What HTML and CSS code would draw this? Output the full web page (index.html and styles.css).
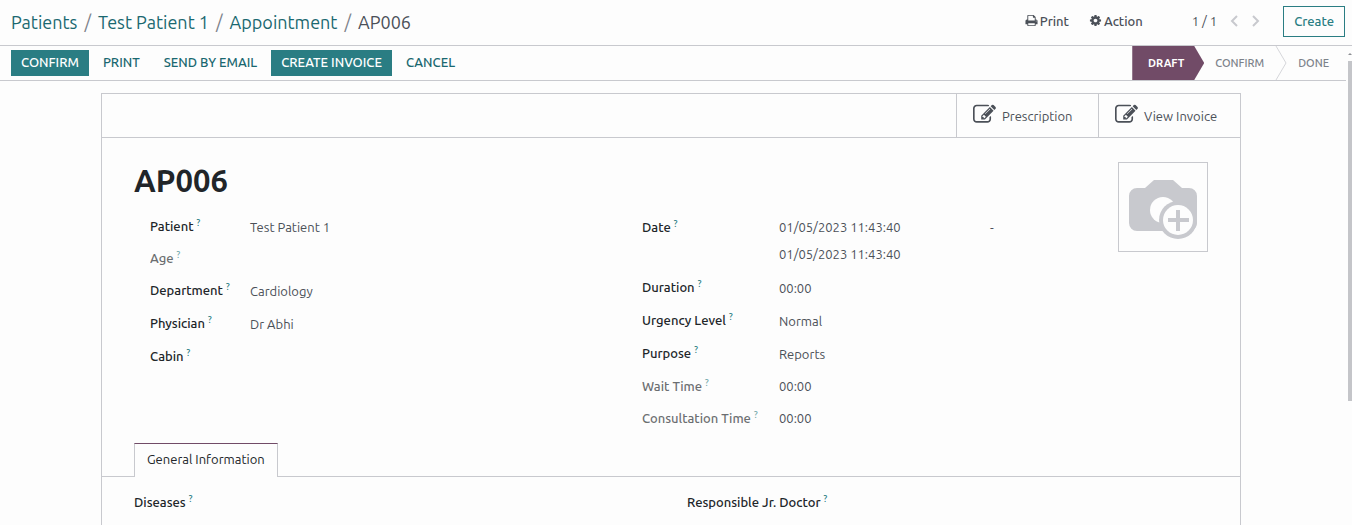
FILE: index.html
```
<!DOCTYPE html>
<html lang="en">
<head>
  <meta charset="UTF-8">
  <meta name="viewport" content="width=device-width, initial-scale=1.0">
  <title>AP006 - Appointment</title>
  <link rel="stylesheet" href="styles.css">
</head>
<body>
  <!-- Shared icons -->
  <svg class="sprite" aria-hidden="true">
    <symbol id="icon-print" viewBox="0 0 1792 1792">
      <path d="M448 1536h896v-256h-896v256zm0-640h896v-384h-160q-40 0-68-28t-28-68v-160h-640v640zm1152 64q0-26-19-45t-45-19-45 19-19 45 19 45 45 19 45-19 19-45zm128 0v416q0 13-9.500 22.500t-22.500 9.500h-224v160q0 40-28 68t-68 28h-960q-40 0-68-28t-28-68v-160h-224q-13 0-22.500-9.500t-9.500-22.500v-416q0-79 56.500-135.500t135.500-56.500h64v-544q0-40 28-68t68-28h672q40 0 88 20t76 48l152 152q28 28 48 76t20 88v256h64q79 0 135.500 56.500t56.500 135.500z"/>
    </symbol>
    <symbol id="icon-cog" viewBox="0 0 1792 1792">
      <path d="M1152 896q0-106-75-181t-181-75-181 75-75 181 75 181 181 75 181-75 75-181zm512-109v222q0 12-8 23t-20 13l-185 28q-19 54-39 91 35 50 107 138 10 12 10 25t-9 23q-27 37-99 108t-94 71q-12 0-26-9l-138-108q-44 23-91 38-16 136-29 186-7 28-36 28h-222q-14 0-24.500-8.500t-11.500-21.500l-28-184q-49-16-90-37l-141 107q-10 9-25 9-14 0-25-11-126-114-165-168-7-10-7-23 0-12 8-23 15-21 51-66.500t54-70.500q-27-50-41-99l-183-27q-13-2-21-12.500t-8-23.500v-222q0-12 8-23t19-13l186-28q14-46 39-92-40-57-107-138-10-12-10-24 0-10 9-23 26-36 98.500-107.500t94.500-71.500q13 0 26 10l138 107q44-23 91-38 16-136 29-186 7-28 36-28h222q14 0 24.500 8.500t11.500 21.500l28 184q49 16 90 37l142-107q9-9 24-9 13 0 25 10 129 119 165 170 7 8 7 22 0 12-8 23-15 21-51 66.500t-54 70.500q26 50 41 98l183 28q13 2 21 12.500t8 23.500z"/>
    </symbol>
    <symbol id="icon-edit" viewBox="0 0 1792 1792">
      <path d="M888 1184l116-116-152-152-116 116v56h96v96h56zm440-720q-16-16-33 1l-350 350q-17 17-1 33t33-1l350-350q17-17 1-33zm80 594v190q0 119-84.500 203.500t-203.500 84.500h-832q-119 0-203.500-84.500t-84.500-203.500v-832q0-119 84.500-203.500t203.500-84.500h832q63 0 117 25 15 7 18 23 3 17-9 29l-49 49q-14 14-32 8-23-6-45-6h-832q-66 0-113 47t-47 113v832q0 66 47 113t113 47h832q66 0 113-47t47-113v-126q0-13 9-22l64-64q15-15 35-7t20 29zm-96-738l288 288-672 672h-288v-288zm444 132l-92 92-288-288 92-92q28-28 68-28t68 28l152 152q28 28 28 68t-28 68z"/>
    </symbol>
  </svg>

  <header class="control-panel">
    <nav class="breadcrumb" aria-label="Breadcrumb">
      <a href="#">Patients</a>
      <span class="slash">/</span>
      <a href="#">Test Patient 1</a>
      <span class="slash">/</span>
      <a href="#">Appointment</a>
      <span class="slash">/</span>
      <span>AP006</span>
    </nav>
    <div class="actions">
      <button class="action" type="button"><svg class="icon"><use href="#icon-print"/></svg>Print</button>
      <button class="action" type="button"><svg class="icon"><use href="#icon-cog"/></svg>Action</button>
    </div>
    <div class="pager">
      <span class="count">1 / 1</span>
      <button type="button" aria-label="Previous"><svg viewBox="0 0 10 12"><path d="M8 1L3 6l5 5"/></svg></button>
      <button type="button" aria-label="Next"><svg viewBox="0 0 10 12"><path d="M2 1l5 5-5 5"/></svg></button>
    </div>
    <button class="create" type="button">Create</button>
  </header>

  <div class="content">
    <main class="form-view">
      <div class="statusbar">
        <div class="buttons">
          <button class="btn primary" type="button">CONFIRM</button>
          <button class="btn" type="button">PRINT</button>
          <button class="btn" type="button">SEND BY EMAIL</button>
          <button class="btn primary" type="button">CREATE INVOICE</button>
          <button class="btn" type="button">CANCEL</button>
        </div>
        <div class="stages">
          <button class="stage current" type="button">DRAFT</button>
          <button class="stage" type="button">CONFIRM</button>
          <svg class="chevron" viewBox="0 0 12 34"><path d="M1 0l10 17L1 34"/></svg>
          <button class="stage last" type="button">DONE</button>
        </div>
      </div>

      <div class="sheet-area">
        <div class="sheet">
          <div class="button-box">
            <button class="stat" type="button"><svg class="icon"><use href="#icon-edit"/></svg>Prescription</button>
            <button class="stat" type="button"><svg class="icon"><use href="#icon-edit"/></svg>View Invoice</button>
          </div>

          <div class="record">
            <div class="details">
              <h1>AP006</h1>
              <div class="groups">
                <dl class="group">
                  <div class="row"><dt>Patient <sup>?</sup></dt><dd>Test Patient 1</dd></div>
                  <div class="row muted"><dt>Age <sup>?</sup></dt><dd></dd></div>
                  <div class="row"><dt>Department <sup>?</sup></dt><dd>Cardiology</dd></div>
                  <div class="row"><dt>Physician <sup>?</sup></dt><dd>Dr Abhi</dd></div>
                  <div class="row"><dt>Cabin <sup>?</sup></dt><dd></dd></div>
                </dl>
                <dl class="group wide">
                  <div class="row range">
                    <dt>Date <sup>?</sup></dt>
                    <dd><span>01/05/2023 11:43:40</span><span>-</span><span>01/05/2023 11:43:40</span></dd>
                  </div>
                  <div class="row"><dt>Duration <sup>?</sup></dt><dd>00:00</dd></div>
                  <div class="row"><dt>Urgency Level <sup>?</sup></dt><dd>Normal</dd></div>
                  <div class="row"><dt>Purpose <sup>?</sup></dt><dd>Reports</dd></div>
                  <div class="row muted"><dt>Wait Time <sup>?</sup></dt><dd>00:00</dd></div>
                  <div class="row muted"><dt>Consultation Time <sup>?</sup></dt><dd>00:00</dd></div>
                </dl>
              </div>
            </div>
            <button class="avatar" type="button" aria-label="Add image">
              <svg viewBox="0 0 88 88">
                <path class="fill" d="M18 25h8l9-8h19l9 8h7a8 8 0 0 1 8 8v27a8 8 0 0 1-8 8H18a8 8 0 0 1-8-8V33a8 8 0 0 1 8-8z"/>
                <circle class="hole" cx="44" cy="47" r="13"/>
                <circle class="fill" cx="59" cy="57" r="19"/>
                <circle class="hole" cx="59" cy="57" r="15"/>
                <path class="fill" d="M57 47h4v8h9v4h-9v9h-4v-9h-8v-4h8z"/>
              </svg>
            </button>
          </div>

          <div class="tabs" role="tablist">
            <button class="tab" type="button" role="tab" aria-selected="true">General Information</button>
          </div>
          <div class="tab-page" role="tabpanel">
            <div class="heading">Diseases <sup>?</sup></div>
            <div class="heading">Responsible Jr. Doctor <sup>?</sup></div>
          </div>
        </div>
      </div>
    </main>
    <div class="scrollbar"><span class="arrow"></span><span class="thumb"></span></div>
  </div>
</body>
</html>
```
FILE: styles.css
```
* {
  box-sizing: border-box;
}
body {
  display: flex;
  flex-direction: column;
  height: 100vh;
  margin: 0;
  overflow: hidden;
  background: #fdfdfd;
  color: #4b5058;
  font: 13px/20px Ubuntu, "Noto Sans", sans-serif;
}
button {
  padding: 0;
  border: 0;
  background: none;
  color: inherit;
  font: inherit;
  white-space: nowrap;
  cursor: pointer;
}
a {
  color: #1a6870;
  text-decoration: none;
}
.sprite {
  position: absolute;
  width: 0;
  height: 0;
}
.icon {
  width: 13px;
  height: 13px;
  fill: currentColor;
}

/* Top bar */
.control-panel {
  display: flex;
  flex: none;
  align-items: center;
  height: 46px;
  padding: 0 7px 2px 11px;
  border-bottom: 1px solid #c8c9ce;
}
.breadcrumb {
  display: flex;
  flex: 1;
  gap: 7px;
  font-size: 18px;
  line-height: 24px;
  white-space: nowrap;
}
.slash {
  color: #7c828a;
}
.actions {
  display: flex;
  gap: 20px;
  padding-bottom: 2px;
  font-weight: 500;
}
.action {
  display: flex;
  align-items: center;
  gap: 2px;
}
.pager {
  display: flex;
  align-items: center;
  gap: 12px;
  margin: 0 22px 0 49px;
  padding-bottom: 2px;
}
.pager button {
  width: 10px;
  height: 12px;
}
.pager svg {
  display: block;
  fill: none;
  stroke: #c8c9ce;
  stroke-width: 2;
}
.create {
  height: 31px;
  padding: 0 10px 2px;
  border: 1px solid #2a7d83;
  color: #2a7d83;
  font-weight: 500;
}

/* Scrolling area */
.content {
  display: flex;
  flex: 1;
  min-height: 0;
}
.form-view {
  flex: 1;
  min-width: 0;
  overflow: hidden;
}
.scrollbar {
  display: flex;
  flex-direction: column;
  align-items: flex-end;
  width: 6px;
}
.arrow {
  margin-top: 7px;
  border: 2px solid transparent;
  border-top: 0;
  border-bottom-color: #8d8f94;
}
.thumb {
  width: 4px;
  height: 71%;
  margin-top: 6px;
  background: #c4c5c9;
}

/* Status bar */
.statusbar {
  display: flex;
  justify-content: space-between;
  height: 35px;
  padding-left: 11px;
  border-bottom: 1px solid #c8c9ce;
}
.buttons {
  display: flex;
  align-items: center;
  gap: 4px;
}
.btn {
  height: 26px;
  padding: 0 10px 2px;
  color: #1a6870;
  font-weight: 500;
}
.primary {
  background: #2a7d83;
  color: #fff;
}
.stages {
  display: flex;
}
.stage {
  padding: 0 11px;
  color: #7c828a;
  font-size: 11px;
  font-weight: 500;
}
.current {
  width: 72px;
  padding: 0 12px 0 8px;
  background: #714b67;
  clip-path: polygon(0 0, 62px 0, 100% 50%, 62px 100%, 0 100%);
  color: #fff;
  font-weight: 600;
}
.last {
  padding-right: 17px;
}
.chevron {
  width: 12px;
  height: 34px;
  fill: none;
  stroke: #d5d6da;
}

/* Sheet */
.sheet-area {
  padding: 12px 4px 0 0;
}
.sheet {
  max-width: 1140px;
  min-height: 600px;
  margin: 0 auto;
  border: 1px solid #c8c9ce;
}
.button-box {
  display: flex;
  justify-content: flex-end;
  height: 44px;
  border-bottom: 1px solid #c8c9ce;
}
.stat {
  display: flex;
  align-items: center;
  gap: 6px;
  width: 142px;
  padding-left: 16px;
  border-left: 1px solid #c8c9ce;
}
.stat .icon {
  width: 23px;
  height: 23px;
  margin-bottom: 3px;
}
.record {
  display: flex;
  padding: 24px 32px 0;
}
.details {
  flex: 1;
}
h1 {
  margin: 0 0 10px;
  color: #212529;
  font-size: 31px;
  font-weight: 600;
  line-height: 38px;
}
.groups {
  display: grid;
  grid-template-columns: 1fr 1fr;
}
.group {
  margin: 0;
  padding-left: 16px;
}
.row {
  display: grid;
  grid-template-columns: 100px 1fr;
  align-items: center;
  height: 33px;
}
.wide .row {
  grid-template-columns: 137px 1fr;
}
dt, .heading {
  color: #212529;
  font-weight: 500;
  white-space: nowrap;
}
dt {
  padding-bottom: 1px;
}
dd {
  margin: 0;
}
sup {
  color: #2a7d83;
  font-size: 9px;
  line-height: 0;
}
.muted {
  height: 31px;
}
.wide .muted {
  height: 32px;
}
.muted dt {
  opacity: 0.66;
}
.wide .range {
  align-items: start;
  height: 61px;
  padding-top: 7px;
}
.range dd {
  display: grid;
  grid-template-columns: 211px 1fr;
  row-gap: 7px;
}
.avatar {
  width: 90px;
  height: 90px;
  border: 1px solid #c8c9ce;
}
.avatar svg {
  display: block;
}
.fill {
  fill: #c8c9ce;
}
.hole {
  fill: #fdfdfd;
}

/* Notebook */
.tabs {
  height: 34px;
  margin-top: 9px;
  padding-left: 32px;
  border-bottom: 1px solid #c8c9ce;
}
.tab {
  height: 34px;
  padding: 0 12px 3px;
  border: 1px solid #c8c9ce;
  border-top-color: #714b67;
  border-bottom: 0;
  background: #fdfdfd;
  color: #212529;
}
.tab-page {
  display: grid;
  grid-template-columns: 1fr 1fr;
  gap: 32px;
  padding: 15px 32px;
}
```
